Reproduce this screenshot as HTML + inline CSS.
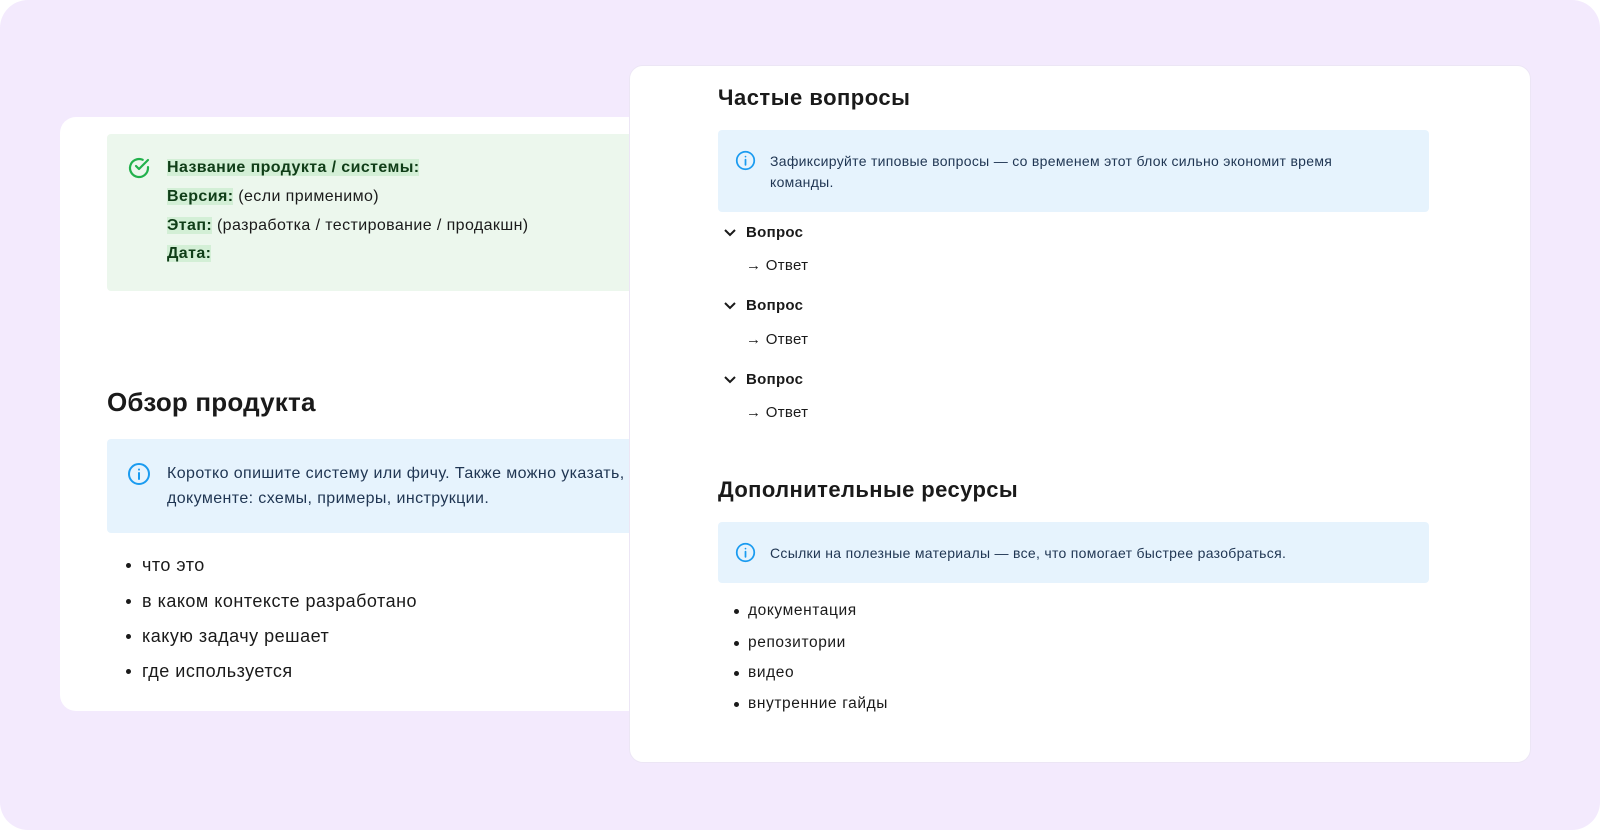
<!DOCTYPE html>
<html><head><meta charset="utf-8"><style>
*{margin:0;padding:0;box-sizing:border-box}
html,body{width:1600px;height:830px;background:#fff;overflow:hidden}
body{font-family:"Liberation Sans","DejaVu Sans",sans-serif;color:#1a1a1a;position:relative}
#bg{position:absolute;left:0;top:0;width:1600px;height:830px;background:#f3eafd;border-radius:28px}
.card{position:absolute;background:#fff;border-radius:16px}
.t{position:absolute;white-space:nowrap;line-height:20px}
.box{position:absolute;border-radius:4px}
.blue{background:#e6f3fd}
.green{background:#ecf7ed}
.b{font-weight:bold}
.hl{background:#d3efd6;color:#0f3d17}
.dot{position:absolute;width:5px;height:5px;border-radius:50%;background:#1a1a1a}
.bt{color:#1f3552}
#left{position:absolute;left:0;top:0;width:629px;height:830px;overflow:hidden}
</style></head><body>
<div id="bg"></div>

<div id="left">
<div class="card" style="left:60px;top:117px;width:640px;height:594px"></div>
<div class="box green" style="left:107px;top:134px;width:540px;height:157px"></div>
<svg style="position:absolute;left:127px;top:156px" width="24" height="24" viewBox="0 0 24 24" fill="none" stroke="#22b14c" stroke-width="2.2" stroke-linecap="round" stroke-linejoin="round"><path d="M21 11.1V12a9 9 0 1 1-5.3-8.2"/><path d="M21 4 12 13l-3-3"/></svg>
<div style="letter-spacing:0.4px">
<div class="t" style="left:167px;top:158px;font-size:16px"><span class="b hl">Название продукта / системы:</span></div>
<div class="t" style="left:167px;top:187px;font-size:16px"><span class="b hl">Версия:</span> (если применимо)</div>
<div class="t" style="left:167px;top:216px;font-size:16px"><span class="b hl">Этап:</span> (разработка / тестирование / продакшн)</div>
<div class="t" style="left:167px;top:244px;font-size:16px"><span class="b hl">Дата:</span></div>
</div>

<div class="t b" style="left:107px;top:387px;font-size:26px;line-height:30px;letter-spacing:0.2px">Обзор продукта</div>
<div class="box blue" style="left:107px;top:439px;width:540px;height:94px"></div>
<svg style="position:absolute;left:127px;top:462px" width="24" height="24" viewBox="0 0 24 24" fill="none" stroke="#1a9bf0" stroke-width="2" stroke-linecap="round"><circle cx="12" cy="12" r="10"/><path d="M12 11v6M12 7.5v.1"/></svg>
<div class="t bt" style="left:167px;top:464px;font-size:16px;letter-spacing:0.4px">Коротко опишите систему или фичу. Также можно указать, что есть в документе</div>
<div class="t bt" style="left:167px;top:489px;font-size:16px;letter-spacing:0.4px">документе: схемы, примеры, инструкции.</div>
<div style="letter-spacing:0.5px">
<div class="dot" style="left:126px;top:563px"></div><div class="t" style="left:142px;top:555px;font-size:18px">что это</div>
<div class="dot" style="left:126px;top:599px"></div><div class="t" style="left:142px;top:591px;font-size:18px">в каком контексте разработано</div>
<div class="dot" style="left:126px;top:634px"></div><div class="t" style="left:142px;top:626px;font-size:18px">какую задачу решает</div>
<div class="dot" style="left:126px;top:669px"></div><div class="t" style="left:142px;top:661px;font-size:18px">где используется</div>
</div>
</div>

<div class="card" style="left:629px;top:65px;width:902px;height:698px;border:1px solid #ece6f5;border-radius:14px"></div>
<div class="t b" style="left:718px;top:85px;font-size:22px;line-height:26px;letter-spacing:0.5px">Частые вопросы</div>
<div class="box blue" style="left:718px;top:130px;width:711px;height:82px"></div>
<svg style="position:absolute;left:735px;top:150px" width="21" height="21" viewBox="0 0 24 24" fill="none" stroke="#1a9bf0" stroke-width="2" stroke-linecap="round"><circle cx="12" cy="12" r="10"/><path d="M12 11v6M12 7.5v.1"/></svg>
<div class="t bt" style="left:770px;top:151px;font-size:14px;letter-spacing:0.3px">Зафиксируйте типовые вопросы — со временем этот блок сильно экономит время</div>
<div class="t bt" style="left:770px;top:172px;font-size:14px;letter-spacing:0.3px">команды.</div>

<div style="letter-spacing:0.3px">
<svg style="position:absolute;left:723px;top:227px" width="14" height="12" viewBox="0 0 14 12" fill="none" stroke="#1a1a1a" stroke-width="2"><path d="M2 3l5 5 5-5"/></svg>
<div class="t b" style="left:746px;top:223px;font-size:15px">Вопрос</div>
<div class="t" style="left:746px;top:256px;font-size:15px">→ Ответ</div>
<svg style="position:absolute;left:723px;top:300px" width="14" height="12" viewBox="0 0 14 12" fill="none" stroke="#1a1a1a" stroke-width="2"><path d="M2 3l5 5 5-5"/></svg>
<div class="t b" style="left:746px;top:296px;font-size:15px">Вопрос</div>
<div class="t" style="left:746px;top:330px;font-size:15px">→ Ответ</div>
<svg style="position:absolute;left:723px;top:374px" width="14" height="12" viewBox="0 0 14 12" fill="none" stroke="#1a1a1a" stroke-width="2"><path d="M2 3l5 5 5-5"/></svg>
<div class="t b" style="left:746px;top:370px;font-size:15px">Вопрос</div>
<div class="t" style="left:746px;top:403px;font-size:15px">→ Ответ</div>
</div>

<div class="t b" style="left:718px;top:477px;font-size:22px;line-height:26px;letter-spacing:0.4px">Дополнительные ресурсы</div>
<div class="box blue" style="left:718px;top:522px;width:711px;height:61px"></div>
<svg style="position:absolute;left:735px;top:542px" width="21" height="21" viewBox="0 0 24 24" fill="none" stroke="#1a9bf0" stroke-width="2" stroke-linecap="round"><circle cx="12" cy="12" r="10"/><path d="M12 11v6M12 7.5v.1"/></svg>
<div class="t bt" style="left:770px;top:543px;font-size:14px;letter-spacing:0.3px">Ссылки на полезные материалы — все, что помогает быстрее разобраться.</div>
<div style="letter-spacing:0.6px">
<div class="dot" style="left:734px;top:609px"></div><div class="t" style="left:748px;top:601px;font-size:15.5px">документация</div>
<div class="dot" style="left:734px;top:641px"></div><div class="t" style="left:748px;top:633px;font-size:15.5px">репозитории</div>
<div class="dot" style="left:734px;top:671px"></div><div class="t" style="left:748px;top:663px;font-size:15.5px">видео</div>
<div class="dot" style="left:734px;top:702px"></div><div class="t" style="left:748px;top:694px;font-size:15.5px">внутренние гайды</div>
</div>
</body></html>
